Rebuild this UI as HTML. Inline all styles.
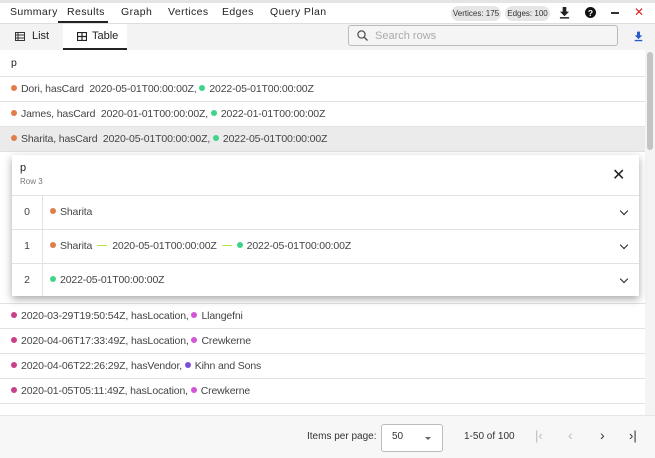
<!DOCTYPE html>
<html><head><style>
*{box-sizing:border-box;margin:0;padding:0}
body{width:655px;height:458px;overflow:hidden;background:#fff;font-family:"Liberation Sans",sans-serif;color:#333;position:relative}
.abs{position:absolute}
.tab{position:absolute;top:6px;font-size:10.5px;letter-spacing:.4px;color:#222}
.dot{display:inline-block;width:6px;height:6px;border-radius:50%;margin-right:4px;vertical-align:1px}
.o{background:#e07d4a}.g{background:#3ed58a}.m{background:#c9408a}.p{background:#d554d8}.v{background:#7a4fd9}
.row{position:absolute;left:0;width:645px;height:25px;border-bottom:1px solid #e2e2e2;font-size:10.5px;letter-spacing:-0.15px;line-height:25px;padding-left:11px;color:#444}
.pill{position:absolute;top:6px;height:15px;border-radius:8px;background:#e6e6e6;font-size:8px;line-height:15px;text-align:center;color:#333}
.prow{position:absolute;left:0;width:627px;height:34px;border-top:1px solid #e2e2e2;font-size:10.5px;letter-spacing:-0.15px;line-height:33px;color:#444}
.pn{position:absolute;left:0;width:31px;text-align:center;border-right:1px solid #e2e2e2;height:100%}
.pc{position:absolute;left:38px}
.chev{position:absolute;right:12px;top:12px;width:6px;height:6px;border-right:1.5px solid #222;border-bottom:1.5px solid #222;transform:rotate(45deg)}
.ar{display:inline-block;width:10px;height:1.5px;background:#b4e34a;vertical-align:3px;margin:0 5px}
</style></head><body>
<div class="abs" style="left:0;top:0;width:655px;height:3px;background:#e4e4e4"></div>
<div class="abs" style="left:0;top:23px;width:655px;height:1px;background:#ddd"></div>
<div class="tab" style="left:10px">Summary</div>
<div class="tab" style="left:67px">Results</div>
<div class="abs" style="left:58px;top:21px;width:50px;height:2px;background:#222"></div>
<div class="tab" style="left:121px">Graph</div>
<div class="tab" style="left:168px">Vertices</div>
<div class="tab" style="left:222px">Edges</div>
<div class="tab" style="left:270px">Query Plan</div>
<div class="pill" style="left:451px;width:50px">Vertices: 175</div>
<div class="pill" style="left:505px;width:45px">Edges: 100</div>
<svg class="abs" style="left:559px;top:7px" width="11" height="12" viewBox="0 0 12 13"><path d="M4 0h4v5h3L6 10 1 5h3z" fill="#222"/><rect x="1" y="11" width="10" height="1.6" fill="#222"/></svg>
<svg class="abs" style="left:585px;top:7px" width="11" height="11"><circle cx="5.5" cy="5.5" r="5.5" fill="#111"/><text x="5.5" y="9" font-size="8.5" font-weight="bold" text-anchor="middle" fill="#fff" font-family="Liberation Sans">?</text></svg>
<div class="abs" style="left:611px;top:12px;width:8px;height:1.5px;background:#333"></div>
<div class="abs" style="left:634px;top:5px;font-size:12px;color:#d22">✕</div>
<!-- sub bar -->
<div class="abs" style="left:0;top:24px;width:655px;height:26px;background:#f3f3f3"></div>
<div class="abs" style="left:63px;top:24px;width:64px;height:26px;background:#fff"></div>
<div class="abs" style="left:63px;top:48px;width:64px;height:2px;background:#222"></div>
<svg class="abs" style="left:15px;top:32px" width="10" height="9"><rect x="0.5" y="0.5" width="9" height="8" fill="none" stroke="#333"/><path d="M0 3h10M0 6h10M3 0v9" stroke="#333"/></svg>
<div class="abs" style="left:32px;top:30px;font-size:11px;color:#222">List</div>
<svg class="abs" style="left:77px;top:32px" width="10" height="9"><rect x="0.5" y="0.5" width="9" height="8" fill="none" stroke="#222" stroke-width="1.2"/><path d="M0 4.5h10M5 0v9" stroke="#222" stroke-width="1.2"/></svg>
<div class="abs" style="left:92px;top:30px;font-size:11px;color:#222">Table</div>
<div class="abs" style="left:348px;top:25px;width:270px;height:21px;border:1px solid #bbb;border-radius:3px;background:#f5f5f5"></div>
<svg class="abs" style="left:357px;top:30px" width="11" height="11"><circle cx="4.5" cy="4.5" r="3.6" fill="none" stroke="#555" stroke-width="1.3"/><path d="M7 7l3.5 3.5" stroke="#555" stroke-width="1.4"/></svg>
<div class="abs" style="left:375px;top:30px;font-size:11px;color:#aaa">Search rows</div>
<svg class="abs" style="left:634px;top:31px" width="9" height="11" viewBox="0 0 12 13"><path d="M4 0h4v5h3L6 10 1 5h3z" fill="#2a5bc9"/><rect x="1" y="11" width="10" height="1.8" fill="#2a5bc9"/></svg>
<!-- table -->
<div class="row" style="top:50px;height:27px;line-height:26px;color:#222">p</div>
<div class="row" style="top:77px"><span class="dot o"></span>Dori, hasCard&nbsp; 2020-05-01T00:00:00Z, <span class="dot g"></span>2022-05-01T00:00:00Z</div>
<div class="row" style="top:102px"><span class="dot o"></span>James, hasCard&nbsp; 2020-01-01T00:00:00Z, <span class="dot g"></span>2022-01-01T00:00:00Z</div>
<div class="row" style="top:127px;background:#ebebeb"><span class="dot o"></span>Sharita, hasCard&nbsp; 2020-05-01T00:00:00Z, <span class="dot g"></span>2022-05-01T00:00:00Z</div>
<div class="row" style="top:152px;height:152px"></div>
<div class="row" style="top:304px"><span class="dot m"></span>2020-03-29T19:50:54Z, hasLocation, <span class="dot p"></span>Llangefni</div>
<div class="row" style="top:329px"><span class="dot m"></span>2020-04-06T17:33:49Z, hasLocation, <span class="dot p"></span>Crewkerne</div>
<div class="row" style="top:354px"><span class="dot m"></span>2020-04-06T22:26:29Z, hasVendor, <span class="dot v"></span>Kihn and Sons</div>
<div class="row" style="top:379px"><span class="dot m"></span>2020-01-05T05:11:49Z, hasLocation, <span class="dot p"></span>Crewkerne</div>
<div class="row" style="top:404px;border:none"></div>
<!-- scrollbar -->
<div class="abs" style="left:645px;top:50px;width:10px;height:365px;background:#f4f4f4"></div>
<div class="abs" style="left:647px;top:52px;width:6px;height:98px;background:#c4c4c4;border-radius:3px"></div>
<!-- popup -->
<div class="abs" style="left:12px;top:155px;width:627px;height:141px;background:#fff;box-shadow:0 3px 8px rgba(0,0,0,.35)">
 <div class="abs" style="left:8px;top:7px;font-size:11px;color:#222">p</div>
 <div class="abs" style="left:8px;top:22px;font-size:8px;color:#777">Row 3</div>
 <div class="abs" style="left:600px;top:10px;font-size:16px;color:#222">✕</div>
 <div class="prow" style="top:40px"><div class="pn">0</div><div class="pc"><span class="dot o"></span>Sharita</div><div class="chev"></div></div>
 <div class="prow" style="top:74px"><div class="pn">1</div><div class="pc"><span class="dot o"></span>Sharita<span class="ar"></span>2020-05-01T00:00:00Z<span class="ar"></span><span class="dot g"></span>2022-05-01T00:00:00Z</div><div class="chev"></div></div>
 <div class="prow" style="top:108px;height:33px"><div class="pn">2</div><div class="pc"><span class="dot g"></span>2022-05-01T00:00:00Z</div><div class="chev"></div></div>
</div>
<!-- footer -->
<div class="abs" style="left:0;top:415px;width:655px;height:43px;background:#f7f7f7;border-top:1px solid #e6e6e6"></div>
<div class="abs" style="left:307px;top:431px;font-size:10px;color:#333">Items per page:</div>
<div class="abs" style="left:381px;top:424px;width:62px;height:28px;border:1px solid #bbb;border-radius:3px;background:#fff"></div>
<div class="abs" style="left:392px;top:431px;font-size:10px;color:#333">50</div>
<div class="abs" style="left:425px;top:437px;border-left:3px solid transparent;border-right:3px solid transparent;border-top:3px solid #666"></div>
<div class="abs" style="left:464px;top:431px;font-size:10px;color:#333">1-50 of 100</div>
<div class="abs" style="left:535px;top:428px;font-size:13px;color:#bbb">|‹</div>
<div class="abs" style="left:568px;top:427px;font-size:14px;color:#bbb">‹</div>
<div class="abs" style="left:600px;top:427px;font-size:14px;color:#333">›</div>
<div class="abs" style="left:629px;top:428px;font-size:13px;color:#333">›|</div>
</body></html>
